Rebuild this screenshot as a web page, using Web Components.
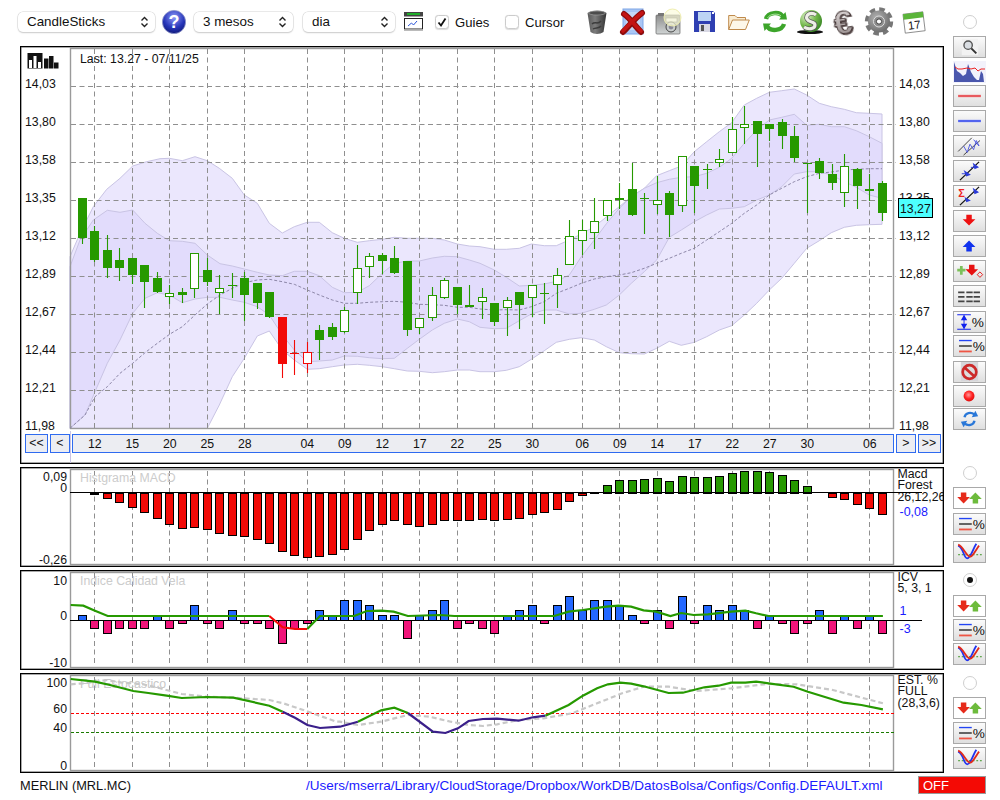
<!DOCTYPE html>
<html>
<head>
<meta charset="utf-8">
<title>Grafic</title>
<style>
  body { margin: 0; background: #fff; font-family: "Liberation Sans", Arial, sans-serif; color: #111; }
</style>
</head>
<body>
<chart-app></chart-app>
<script>
// helpers shared by the charts
const FONT = `"Liberation Sans", Arial, sans-serif`;
const xi = i => Math.floor(82.3 + 12.5 * i) + .5;
const GRID_IDX = [1, 4, 7, 10, 13, 18, 21, 24, 27, 30, 33, 36, 40, 43, 46, 49, 52, 55, 58, 63];
const DATES = ["12", "15", "20", "25", "28", "04", "09", "12", "17", "22", "25", "30", "06", "09", "14", "17", "22", "27", "30", "06"];
const GREEN = "#269900", RED = "#f20a07";

const pts = (list, fx, fy) => list.map(p => `${(fx(p[0])).toFixed(1)},${(fy(p[1])).toFixed(1)}`);
// points were read off crops of the chart, so each block has its own offset
const a = l => pts(l, x => 60 + x / 3, y => 100 + y / 3);
const b = l => pts(l, x => 480 + x / 3, y => 80 + y / 3);
const c = l => pts(l, x => x / 3, y => 565 + y / 3);
const d = l => pts(l, x => 340 + x / 2.8, y => 565 + y / 3);

const vGrid = (y1, y2) => GRID_IDX.map(i =>
  `<line x1="${xi(i)}" x2="${xi(i)}" y1="${y1}" y2="${y2}" stroke="#8f8f8f" stroke-dasharray="5 3.5"/>`).join("");
const label = (x, y, t, anchor = "start", fill = "#111") =>
  `<text x="${x}" y="${y}" text-anchor="${anchor}" fill="${fill}">${t}</text>`;

// ---------- small mac style controls ----------
class MacSelect extends HTMLElement {
  connectedCallback() {
    this.attachShadow({ mode: "open" }).innerHTML = `
    <style>
      :host { display: flex; align-items: center; box-sizing: border-box; height: 20px; padding-left: 9px;
        background: #fff; border-radius: 5px; font-size: 13.4px; position: relative;
        box-shadow: 0 0 0 .5px #d4d4d4, 0 1px 1.5px #c8c8c8; }
      svg { position: absolute; right: 6px; top: 4px; }
    </style>
    <slot></slot>
    <svg width="9" height="12" viewBox="0 0 9 12" fill="none" stroke="#222" stroke-width="1.4">
      <path d="M1.5 4.5 4.5 1.5 7.5 4.5M1.5 7.5 4.5 10.5 7.5 7.5"/>
    </svg>`;
  }
}
customElements.define("mac-select", MacSelect);

class MacCheck extends HTMLElement {
  connectedCallback() {
    const on = this.hasAttribute("checked");
    this.attachShadow({ mode: "open" }).innerHTML = `
    <style>
      :host { display: flex; align-items: center; gap: 6px; font-size: 13.1px; margin-top: 1.5px; }
      .box { box-sizing: border-box; width: 14px; height: 14px; border-radius: 3.5px; background: #fff;
        border: 1px solid #ccc; box-shadow: 0 .5px 1px #ddd; display: flex; }
    </style>
    <span class="box">${on ? `<svg width="12" height="12" viewBox="0 0 12 12"><path d="M2.5 6.5 5 9.5 9.5 2.5" fill="none" stroke="#111" stroke-width="1.8"/></svg>` : ""}</span>
    <slot></slot>`;
  }
}
customElements.define("mac-check", MacCheck);

class MacRadio extends HTMLElement {
  connectedCallback() {
    const on = this.hasAttribute("checked");
    this.attachShadow({ mode: "open" }).innerHTML = `
    <style>
      :host { display: flex; justify-content: center; }
      .r { box-sizing: border-box; width: 14px; height: 14px; border-radius: 50%; background: #fff;
        border: 1px solid #cfcfcf; display: flex; align-items: center; justify-content: center; }
      i { width: 6px; height: 6px; border-radius: 50%; background: #111; }
    </style>
    <span class="r">${on ? "<i></i>" : ""}</span>`;
  }
}
customElements.define("mac-radio", MacRadio);

// ---------- toolbar icons ----------
const TB_ICONS = {
  help: [24, 24, `<defs><radialGradient id="g" cx=".5" cy=".3" r=".75"><stop offset="0" stop-color="#8f9af8"/><stop offset=".6" stop-color="#2635b8"/><stop offset="1" stop-color="#0c1670"/></radialGradient></defs>
    <circle cx="12" cy="12" r="11.6" fill="url(#g)" stroke="#8d93c9" stroke-width=".8"/>
    <text x="12" y="18" text-anchor="middle" font-size="18" font-weight="700" fill="#fff">?</text>`],
  mini: [19, 19, `<rect width="19" height="4.5" fill="#444"/><rect x="3" y="1" width="13" height="2" fill="#1fae2a"/>
    <rect x=".5" y="6.5" width="18" height="10.5" fill="#fff" stroke="#222"/><path d="M4 14 7.5 11 9.5 13 13 9" fill="none" stroke="#2b55d8"/><rect y="17.5" width="19" height="1.5" fill="#bbb"/>`],
  trash: [20, 24, `<defs><linearGradient id="g" x1="0" x2="1"><stop offset="0" stop-color="#5a5a5a"/><stop offset=".4" stop-color="#7c7c7c"/><stop offset="1" stop-color="#333"/></linearGradient></defs>
    <path d="M.5 3C5-.5 15-.5 19.5 3L16.5 22C13 24.5 7 24.5 3.5 22Z" fill="url(#g)"/><ellipse cx="10" cy="3" rx="8.5" ry="2" fill="#4c4c4c" stroke="#aaa" stroke-width=".6"/>
    <path d="M5 14c3-3 6 1 9-3M6 19c3-2 6 0 8-3" fill="none" stroke="#3c3c3c" stroke-width="1.5"/>`],
  del: [26, 26, `<rect x="3" y="0" width="20" height="25" fill="#a9c6f5" stroke="#7ea6e6"/><rect x="6" y="3" width="14" height="18" fill="#c4d8f8"/>
    <path d="M4 5C9 8 15 17 21 23M22 4C16 8 9 17 3 23" fill="none" stroke="#8e0c0c" stroke-width="6" stroke-linecap="round"/>
    <path d="M4 5C9 8 15 17 21 22M22 4C16 8 9 16 3 22" fill="none" stroke="#c41414" stroke-width="3.6" stroke-linecap="round"/>`],
  camera: [27, 27, `<defs><linearGradient id="g" x1="0" x2="0" y1="0" y2="1"><stop offset="0" stop-color="#8c8c8c"/><stop offset="1" stop-color="#d0d4d4"/></linearGradient></defs>
    <rect x="1" y="7" width="24" height="19" rx="1" fill="url(#g)" stroke="#666" stroke-width=".7"/><rect x="3" y="5" width="6" height="3" fill="#777"/>
    <rect x="11" y="10" width="11" height="4" fill="#e8e8e8" stroke="#555" stroke-width=".6"/>
    <circle cx="16" cy="19" r="5" fill="#c8cccc" stroke="#444"/><circle cx="16" cy="19" r="2.4" fill="#889"/>
    <circle cx="17.5" cy="9.5" r="8.5" fill="#fbfbd8" fill-opacity=".65" stroke="#efeeb0"/>`],
  floppy: [21, 21, `<path d="M0 0H19L21 2V21H0Z" fill="#2f3fb2"/><rect x="4" y="1" width="13" height="9" fill="#bcd4f4"/><rect x="5" y="13" width="11" height="8" fill="#d8d8e4"/><rect x="7" y="14" width="3" height="6" fill="#555"/><rect x="18" y="1" width="2" height="2" fill="#fff"/>`],
  folder: [22, 16, `<path d="M.7 15.5V1.5H7L9 3.5H17.5V6" fill="#f9ecd2" stroke="#bf8a4c"/><path d="M.7 15.5 4.5 6H21.3L17.5 15.5Z" fill="#fdf7e9" stroke="#bf8a4c"/>`],
  sync: [24, 23, `<path d="M3 9C5 2 17 1 20 7" fill="none" stroke="#3da52b" stroke-width="4.4"/><path d="M16 9.5 24 9.5 22.5 2Z" fill="#3da52b"/>
    <path d="M21 14C19 21 7 22 4 16" fill="none" stroke="#3da52b" stroke-width="4.4"/><path d="M8 13.5 0 13.5 1.5 21Z" fill="#3da52b"/>
    <path d="M4.5 8C7 3.5 15 3 18 6" fill="none" stroke="#a9e49c" stroke-width="1"/>`],
  coin: [26, 24, `<defs><radialGradient id="g" cx=".3" cy=".3" r=".85"><stop offset="0" stop-color="#dcefc8"/><stop offset=".5" stop-color="#73b84a"/><stop offset="1" stop-color="#2e7d1e"/></radialGradient></defs>
    <ellipse cx="13" cy="22" rx="13" ry="2" fill="#111"/><circle cx="14" cy="11" r="11" fill="url(#g)"/>
    <path d="M19 5C14 1 8 5 10 9 12 13 18 11 18 15 18 19 11 20 7 17" fill="none" stroke="#555" stroke-width="4.6"/>
    <path d="M19 5C14 1 8 5 10 9 12 13 18 11 18 15 18 19 11 20 7 17" fill="none" stroke="#eeeee6" stroke-width="3.2"/>`],
  euro: [23, 24, `<defs><linearGradient id="g" x1="0" x2="0" y1="0" y2="1"><stop offset="0" stop-color="#e6e0e0"/><stop offset="1" stop-color="#8e8484"/></linearGradient></defs>
    <text x="11" y="24" text-anchor="middle" font-size="33" font-weight="700" fill="url(#g)" stroke="#3a2c2c" stroke-width=".8" transform="rotate(-8 11 12)" style="filter:drop-shadow(1.5px 1px 0 #5a4c4c)">€</text>`],
  gear: [28, 29, `<defs><radialGradient id="g" cx=".4" cy=".35" r=".8"><stop offset="0" stop-color="#b4b4b4"/><stop offset="1" stop-color="#5f5f5f"/></radialGradient></defs>
    <circle cx="14" cy="14.5" r="12" fill="none" stroke="#777" stroke-width="4.4" stroke-dasharray="5.4 4"/><circle cx="14" cy="14.5" r="11" fill="url(#g)"/>
    <circle cx="14" cy="14.5" r="5.5" fill="#8c8c8c" stroke="#ddd"/><circle cx="14" cy="14.5" r="2.6" fill="#fff" stroke="#444"/>`],
  cal: [24, 24, `<g transform="rotate(-7 12 12)"><rect x="2" y="3" width="20" height="19" fill="#fff" stroke="#666" stroke-width=".7"/><rect x="2" y="3" width="20" height="5.5" fill="#5bb53a"/>
    <text x="12" y="19" text-anchor="middle" font-size="11.5" fill="#111">17</text></g>`]
};
class TbIcon extends HTMLElement {
  connectedCallback() {
    const [w, h, body] = TB_ICONS[this.getAttribute("name")];
    this.attachShadow({ mode: "open" }).innerHTML = `
    <style>:host { display: block; flex: none; width: ${w}px; height: ${h}px; font-family: ${FONT}; } svg { display: block; overflow: visible; }</style>
    <svg width="${w}" height="${h}" viewBox="0 0 ${w} ${h}">${body}</svg>`;
  }
}
customElements.define("tb-icon", TbIcon);

// ---------- side buttons ----------
const arrowDown = (x, y, col) => `<path d="M${x - 3} ${y - 5}h6v5h4l-7 7-7-7h4z" fill="${col}"/>`;
const arrowUp = (x, y, col) => `<path d="M${x - 3} ${y + 5}h6v-5h4l-7-7-7 7h4z" fill="${col}"/>`;
const pct = (x, y, s) => `<text x="${x}" y="${y}" font-size="${s}" fill="#111">%</text>`;
const SIDE_ICONS = {
  search: `<rect x="8" y="2" width="18" height="18" fill="#f2f2f2"/><circle cx="15" cy="9" r="4.6" fill="#d9dde2" stroke="#555" stroke-width="1.5"/><path d="M18.5 12.5 24 18" stroke="#333" stroke-width="2.2"/>`,
  hist: `<rect width="33" height="22" fill="#f2f2fb"/><path d="M1 21V1L4 10 7 12 10 15 13 13 15 3 18 11 21 16 24 19 26 19 28 10 30 13 31 21Z" fill="#4a57ad"/><path d="M2 6 5 8 9 8 14 7 18 8 22 7 25 10 28 8 32 8" fill="none" stroke="#e22" stroke-width="1"/>`,
  lred: `<path d="M4 11H29" stroke="#f4b0b0" stroke-width="3"/><path d="M4 11H29" stroke="#e22a30" stroke-width="1.4"/>`,
  lblue: `<path d="M4 11H29" stroke="#b0b8f8" stroke-width="3"/><path d="M4 11H29" stroke="#1f35e8" stroke-width="1.4"/>`,
  channel: `<path d="M4 17 19 2M10 21 28 5" stroke="#333" stroke-width="1"/><path d="M10 11 14 18 17 9 21 15 24 5 27 11 21 4" fill="none" stroke="#4a55e0" stroke-width="1"/>`,
  trend: `<path d="M6 21 27 1" stroke="#111" stroke-width="1.4"/><path d="M10 10l3 7 5-2zM20 2l2 7 5-2z" fill="#2b3bd8"/><path d="M8 14h6M18 7h6" stroke="#2b3bd8"/>`,
  sigma: `<text x="4" y="12" font-size="12" font-weight="700" fill="#e22">Σ</text><path d="M6 21 27 1" stroke="#111" stroke-width="1.4"/><path d="M11 12l2 6 5-2zM20 2l2 7 5-2z" fill="#2b3bd8"/>`,
  down: arrowDown(16, 9, "#ee1111"),
  up: arrowUp(16, 12, "#1133ee"),
  plus: `<path d="M3 10H12M7.5 5.5V15" stroke="#7cc05a" stroke-width="3"/>${arrowDown(19, 9, "#e61111")}<path d="M28 12l3 3-3 3-3-3z" fill="none" stroke="#e61111"/>`,
  rows: `<g stroke="#444" stroke-width="2"><path d="M4 7h7M13 7h7M21 7h7M4 12h7M13 12h7M21 12h7M4 17h7M13 17h7M21 17h7"/></g>`,
  iperc: `<path d="M3 3H18M3 19H18" stroke="#1122ee" stroke-width="1.3"/><path d="M10.5 4V18" stroke="#1122ee"/><path d="M10.5 3 7 9H14zM10.5 19 7 13H14z" fill="#1122ee"/>${pct(19, 17, 15)}`,
  lperc: `<path d="M5 5H19" stroke="#2244f4" stroke-width="1.5"/><path d="M5 11H19" stroke="#222" stroke-width="1.5"/><path d="M5 17H19" stroke="#ee5544" stroke-width="2"/>${pct(20, 17, 15)}`,
  stop: `<rect x="7" y="0" width="19" height="21" fill="#d6d6da"/><circle cx="16.5" cy="11" r="7.5" fill="#ddd" stroke="#cc2a2a" stroke-width="3"/><path d="M11 6 22 16" stroke="#cc2a2a" stroke-width="3"/>`,
  rec: `<defs><radialGradient id="g" cx=".45" cy=".4" r=".6"><stop offset="0" stop-color="#ff9a9a"/><stop offset=".6" stop-color="#f22"/><stop offset="1" stop-color="#d11"/></radialGradient></defs><circle cx="16" cy="11" r="6" fill="url(#g)"/>`,
  refresh: `<path d="M11 9C12 4 18 3 22 6" fill="none" stroke="#2a78d8" stroke-width="2.6"/><path d="M19 9 26 8 23 2Z" fill="#2a78d8"/><path d="M22 13C21 18 15 19 11 16" fill="none" stroke="#2a78d8" stroke-width="2.6"/><path d="M14 13 7 14 10 20Z" fill="#2a78d8"/>`,
  updown: arrowDown(10, 10, "#e62a1a") + arrowUp(23, 12, "#6dbb3c"),
  vee: `<path d="M4 14H30" stroke="#2a8a10" stroke-dasharray="2 2"/><path d="M4 4C10 6 10 18 14 18 18 18 20 8 24 2" fill="none" stroke="#2233ee" stroke-width="2"/><path d="M4 3C10 5 14 18 18 16 21 14 24 8 27 4" fill="none" stroke="#e22a1a" stroke-width="2"/>`
};
class SideBtn extends HTMLElement {
  connectedCallback() {
    const name = this.getAttribute("icon");
    const flat = name === "hist", white = name === "updown";
    this.attachShadow({ mode: "open" }).innerHTML = `
    <style>
      :host { display: block; box-sizing: border-box; width: 33px; height: 22px; font-family: ${FONT};
        border: ${flat ? "0" : "1px solid #a9a9a9"}; background: ${white ? "#fff" : flat ? "none" : "linear-gradient(#fbfbfb,#dfdfdf)"}; }
      svg { display: block; width: 100%; height: 100%; }
    </style>
    <svg viewBox="0 0 33 22">${SIDE_ICONS[name]}</svg>`;
  }
}
customElements.define("side-btn", SideBtn);

// ---------- date bar below the candles ----------
class DateNav extends HTMLElement {
  connectedCallback() {
    const dates = DATES.map((t, k) => `<span style="grid-column:${GRID_IDX[k] + 1}">${t}</span>`).join("");
    this.attachShadow({ mode: "open" }).innerHTML = `
    <style>
      :host { display: flex; height: 19px; margin: 3px 0 0 4px; gap: 2px; font-size: 12.3px; line-height: 19px; }
      div { box-sizing: border-box; border: 1px solid #2f6bf0; background: #ecedf2; display: flex; align-items: center; justify-content: center; }
      .n1 { width: 23px; } .n2 { width: 19.5px; }
      .dates { display: grid; grid-template-columns: repeat(65, 12.5px); width: 822.5px; padding-left: 3.5px; justify-content: start; }
      .dates span { justify-self: center; grid-row: 1; white-space: nowrap; }
    </style>
    <div class="n1">&lt;&lt;</div><div class="n2">&lt;</div>
    <div class="dates">${dates}</div>
    <div class="n2">&gt;</div><div class="n1">&gt;&gt;</div>`;
  }
}
customElements.define("date-nav", DateNav);

// ---------- main candle chart ----------
const OUTER_TOP = [...a([[30,470],[60,400],[100,320],[140,268],[180,235],[218,198],[260,185],[300,176],[328,175],[367,182],[405,170],[442,182],[478,205],[517,235],[553,285],[592,310],[628,370],[667,399],[703,380],[742,367],[778,367],[817,398],[853,415],[892,427],[928,422],[967,418],[1003,412],[1042,415],[1078,415],[1117,415],[1153,420],[1192,432],[1228,438]]),
  ...b([[0,500],[43,508],[79,508],[118,505],[154,492],[193,497],[229,497],[268,480],[304,462],[343,440],[380,410],[418,380],[454,350],[493,325],[530,287],[568,272],[604,258],[643,215],[680,185],[718,155],[755,128],[793,75],[830,55],[868,37],[905,32],[943,27],[980,45],[1018,70],[1054,80],[1093,88],[1129,98],[1168,100],[1206,102]])];
const OUTER_BOT = [...a([[30,985],[442,985],[478,915],[517,830],[553,775],[592,708],[628,693],[667,750],[703,780],[742,808],[778,806],[817,800],[853,795],[892,793],[928,796],[967,800],[1003,806],[1042,813],[1078,814],[1117,818],[1153,815],[1192,810],[1228,810]]),
  ...b([[0,875],[43,875],[79,871],[118,860],[154,838],[193,812],[229,787],[268,778],[304,773],[343,780],[379,800],[418,818],[454,821],[493,822],[530,805],[568,784],[604,796],[643,787],[680,770],[718,750],[755,737],[793,705],[830,670],[868,630],[905,595],[943,550],[980,505],[1018,482],[1054,458],[1093,442],[1129,436],[1168,434],[1206,433]])];
const INNER_TOP = [...a([[30,500],[60,420],[100,360],[142,331],[180,337],[218,330],[255,370],[292,400],[328,422],[367,424],[405,430],[442,465],[480,491],[517,498],[553,507],[592,517],[628,525],[667,527],[703,514],[742,514],[778,527],[817,562],[853,578],[892,577],[928,557],[967,520],[1003,490],[1042,483],[1078,483],[1117,474],[1153,469],[1192,470],[1228,480]]),
  ...b([[0,550],[43,570],[79,592],[118,618],[154,616],[193,612],[229,604],[268,585],[304,530],[343,480],[380,430],[418,385],[454,350],[493,325],[530,308],[568,298],[604,292],[643,290],[680,280],[718,262],[755,235],[793,190],[830,150],[868,120],[905,112],[943,103],[980,136],[1018,133],[1054,140],[1093,140],[1129,152],[1168,170],[1206,190]])];
const INNER_BOT = [...a([[30,985],[75,945],[103,880],[142,790],[180,720],[218,640],[255,595],[292,578],[328,585],[367,608],[405,597],[442,592],[480,592],[517,600],[553,607],[592,620],[628,645],[667,705],[703,750],[742,785],[778,783],[817,780],[853,768],[892,769],[928,773],[967,776],[1003,775],[1042,745],[1078,718],[1117,690],[1153,670],[1192,657],[1228,665]]),
  ...b([[0,742],[43,746],[79,745],[118,722],[154,702],[193,690],[229,690],[268,702],[304,700],[343,688],[379,675],[418,645],[454,610],[493,575],[530,540],[568,472],[604,450],[643,425],[680,405],[718,387],[755,385],[793,380],[830,360],[868,345],[905,320],[943,282],[980,275],[1018,275],[1054,285],[1093,305],[1129,322],[1168,345],[1206,355]])];
const SMA = [...a([[30,985],[75,945],[105,890],[142,860],[180,820],[218,790],[255,758],[292,730],[330,702],[367,680],[405,645],[442,612],[480,585],[517,565],[553,548],[592,540],[628,538],[667,545],[703,553],[742,570],[778,585],[817,600],[853,610],[892,610],[928,607],[967,605],[1003,604],[1042,607],[1078,613],[1117,614],[1153,616],[1192,622],[1228,622]]),
  ...b([[0,687],[43,690],[79,689],[118,690],[154,680],[193,665],[229,640],[268,625],[304,610],[343,597],[379,590],[418,585],[454,578],[493,565],[530,550],[568,535],[604,520],[643,505],[680,480],[718,455],[755,430],[793,400],[830,375],[868,345],[905,325],[943,305],[980,290],[1018,280],[1054,276],[1093,270],[1129,268],[1168,266],[1206,266]])];

// type (f filled, h hollow, d cross), wick top, wick bottom, body top, body bottom
const CANDLES_A = [["f",294,432,294,414],["f",378,485,393,480],["f",405,534,450,504],["f",445,543,480,504],["f",474,552,474,525],["f",495,624,495,546],["f",516,580,534,576],["h",555,611,580,590],["f",564,609,576,585],["h",460,594,460,568],["f",474,558,510,546],["h",525,642,565,578],["d",519,594,556,556],["f",516,664,534,585],["f",549,627,549,609],["f",576,654,576,651],["f",651,834,651,792],["d",720,825,759,759],["h",726,820,757,791],["f",675,780,690,720],["f",669,720,681,711],["h",621,699,631,695],["h",435,612,505,578],["h",460,534,469,500],["f",460,522,465,483],["f",438,522,474,519],["f",483,708,483,690],["h",655,702,655,683],["h",561,663,586,653],["h",534,597,541,593],["f",561,642,561,615],["f",555,622,615,622]];
const CANDLES_B = [["h",625,717,652,667],["f",669,738,669,726],["h",652,768,661,683],["f",636,747,636,675],["h",616,711,616,653],["d",610,732,640,640],["h",565,684,586,614],["h",420,555,469,555],["h",420,525,451,482],["h",354,507,424,458],["h",361,423,361,407],["f",309,387,354,360],["f",249,408,327,405],["d",339,462,355,355],["h",288,402,361,374],["f",333,471,339,405],["h",229,396,229,377],["f",258,399,258,318],["d",252,327,268,268],["h",207,261,238,250],["h",111,220,148,218],["h",78,192,133,143],["f",123,261,123,162],["f",132,183,132,147],["f",117,207,126,168],["f",138,246,168,234],["d",249,399,249,249],["f",234,297,243,279],["f",251,329,282,309],["h",222,381,259,338],["f",265,387,267,318],["f",282,363,327,333],["f",303,423,309,399]];

function candle(x, type, wt, wb, bt, bb, col) {
  let s = `<line x1="${x}" x2="${x}" y1="${wt}" y2="${wb}" stroke="${col}" stroke-width="1.1"/>`;
  if (type === "f") s += `<rect x="${x - 4.5}" y="${bt}" width="9" height="${Math.max(bb - bt, 2)}" fill="${col}"/>`;
  if (type === "h") s += `<rect x="${x - 4}" y="${bt + .5}" width="8" height="${Math.max(bb - bt - 1, 2)}" fill="#fff" stroke="${col}"/>`;
  if (type === "d") s += `<line x1="${x - 4.5}" x2="${x + 4.5}" y1="${bt + .5}" y2="${bt + .5}" stroke="${col}"/>`;
  return s;
}

class PricePanel extends HTMLElement {
  connectedCallback() {
    const prices = ["14,03", "13,80", "13,58", "13,35", "13,12", "12,89", "12,67", "12,44", "12,21", "11,98"];
    const yG = prices.map((_, k) => 86.5 + 38 * k);
    let cs = "";
    [...CANDLES_A.map(r => [r, 100]), ...CANDLES_B.map(r => [r, 80])].forEach(([r, off], i) => {
      const col = i >= 16 && i <= 18 ? RED : GREEN;
      const y = v => Math.round(off + v / 3);
      cs += candle(xi(i), r[0], y(r[1]), y(r[2]), y(r[3]), y(r[4]), col);
    });
    const band = (top, bot, fill) => `<polygon points="${[...top, ...[...bot].reverse()].join(" ")}" fill="${fill}" stroke="#c9c4e4"/>`;
    const hLines = yG.slice(0, 9).map(y => `<line x1="71" x2="896" y1="${y}" y2="${y}" stroke="#8f8f8f" stroke-dasharray="5 3.5"/>`).join("");
    const icon = `<g fill="#111"><rect x="27.5" y="53" width="15" height="15.5"/><rect x="44" y="58.5" width="4.5" height="10"/><rect x="49" y="56" width="4.5" height="12.5"/><rect x="54" y="62.5" width="4.5" height="6"/></g>
      <g fill="#fff"><rect x="29" y="60" width="3" height="8"/><rect x="33.5" y="56" width="3" height="12"/><rect x="38" y="62" width="3" height="6"/></g>`;
    this.attachShadow({ mode: "open" }).innerHTML = `
    <style>
      :host { display: block; box-sizing: border-box; height: 418px; border: 1px solid #000; position: relative;
        font-size: 12.3px; font-family: ${FONT}; box-shadow: inset 0 0 0 .5px #555; }
      :host::after { content: ""; position: absolute; left: 49px; top: 384px; bottom: 0; width: 1px; background: #c9c4e4; }
      svg { display: block; overflow: visible; }
    </style>
    <svg width="922" height="384" viewBox="21 47 922 384">
      ${band(OUTER_TOP, OUTER_BOT, "#ebe7fd")}
      ${band(INNER_TOP, INNER_BOT, "#e2dcfc")}
      ${hLines}
      ${vGrid(49, 428)}
      <rect x="70.5" y="48.5" width="823" height="380" fill="none" stroke="#9a9a9a" stroke-width="1.4"/>
      <polyline points="${SMA.join(" ")}" fill="none" stroke="#8d87a8" stroke-dasharray="3 2"/>
      ${cs}
      ${icon}
      ${label(80, 63, "Last: 13.27 - 07/11/25")}
      ${prices.map((p, k) => label(25, 88 + 38 * k, p)).join("")}
      ${prices.map((p, k) => label(899, 88 + 38 * k, p)).join("")}
      <rect x="898.5" y="198.5" width="34" height="19" fill="#4dffff" stroke="#000"/>
      ${label(900, 212.5, "13,27")}
    </svg>
    <date-nav></date-nav>`;
  }
}
customElements.define("price-panel", PricePanel);

// ---------- lower indicator panels ----------
const MACD_Y = { 1: 493.5, 2: 497.7, 3: 501.7, 4: 506.7, 5: 511.7, 6: 517.7, 7: 523.7, 8: 527.7, 9: 526.7, 10: 528.7, 11: 532.7, 12: 534.7, 13: 536.3, 14: 539.3, 15: 543.3, 16: 551.3, 17: 555.3, 18: 557.3, 19: 556.3, 20: 554.3, 21: 549.3, 22: 539.3, 23: 530.3, 24: 524, 25: 520, 26: 524, 27: 526, 28: 524, 29: 520, 30: 520, 31: 520, 32: 519, 33: 520, 34: 519, 35: 518, 36: 514, 37: 512, 38: 509, 39: 501, 40: 495, 41: 491.5, 42: 485, 43: 480, 44: 480, 45: 479, 46: 478, 47: 481, 48: 476, 49: 477, 50: 477, 51: 476, 52: 473, 53: 471, 54: 471, 55: 472, 56: 475, 57: 480, 58: 486, 60: 497, 61: 499, 62: 504, 63: 508, 64: 514 };
const ICV = [1,-2,-3,-2,-2,-2,1,-2,-1,3,-1,-2,2,-1,-1,-2,-5,-2,-1,2,1,4,4,3,1,1,-4,1,2,4,-2,-1,-2,-3,1,2,3,-1,3,5,2,4,4,3,1,-1,2,-2,5,-1,3,2,3,2,-2,1,-1,-3,-1,2,-3,1,-2,1,-3];

function macdDraw() {
  let s = vGrid(471, 564);
  for (let i = 0; i < 65; i++) {
    const y = MACD_Y[i];
    if (y === undefined) continue;
    const top = Math.round(Math.min(y, 492.5)), bot = Math.round(Math.max(y, 492.5));
    s += `<rect x="${xi(i) - 4}" y="${top + .5}" width="8" height="${Math.max(bot - top, 1)}" fill="${y > 492.5 ? RED : GREEN}" stroke="#000"/>`;
  }
  s += label(80, 482, "Histgrama MACD", "start", "#cccccc");
  s += `<line x1="70" x2="898" y1="492.5" y2="492.5" stroke="#000" stroke-width="1.2"/>`;
  s += label(67, 481, "0,09", "end") + label(67, 492, "0", "end") + label(67, 564, "-0,26", "end");
  return s;
}
function icvDraw() {
  let s = vGrid(573, 666);
  const unit = { 1: 5, 2: 10, 3: 15, 4: 20, 5: 24 };
  ICV.forEach((v, i) => {
    const h = v > 0 ? unit[v] : [0, 3, 8, 13, 18, 23][-v];
    const y = v > 0 ? 620 - h : 620;
    s += `<rect x="${xi(i) - 4}" y="${y + .5}" width="8" height="${h}" fill="${v > 0 ? "#2468ff" : "#f0147a"}" stroke="#000"/>`;
  });
  s += label(80, 585, "Indice Calidad Vela", "start", "#cccccc");
  s += `<line x1="70" x2="898" y1="620.5" y2="620.5" stroke="#000" stroke-width="1.2"/>`;
  const line = (p, col) => `<polyline points="${p.join(" ")}" fill="none" stroke="${col}" stroke-width="2.2"/>`;
  s += line(c([[212,120],[250,122],[285,137],[323,153],[808,153]]), GREEN);
  s += line(c([[808,153],[848,187],[885,192],[922,192]]), RED);
  s += line([...c([[922,192],[960,153]]), ...d([[0,153],[40,153],[75,138],[115,137],[150,140],[190,153],[280,150],[320,153],[600,153],[640,140],[680,135],[745,125],[780,122],[815,125],[850,136],[885,140],[925,153],[955,144],[990,150],[1030,148],[1095,140],[1135,137],[1165,145],[1200,153],[1520,153]])], GREEN);
  s += label(67, 585, "10", "end") + label(67, 620, "0", "end") + label(67, 667, "-10", "end");
  return s;
}
function estDraw() {
  let s = vGrid(677, 769);
  s += `<line x1="71" x2="895" y1="713.5" y2="713.5" stroke="#f00" stroke-dasharray="3 2"/>`;
  s += `<line x1="71" x2="895" y1="732.5" y2="732.5" stroke="#1a7a00" stroke-dasharray="3 2"/>`;
  s += label(80, 688, "Full Estocastico", "start", "#c8c8c8");
  const line = (p, col, extra = "") => `<polyline points="${p.join(" ")}" fill="none" stroke="${col}" stroke-width="2.2" ${extra}/>`;
  s += line([...c([[212,358],[250,355],[320,345],[360,352],[430,358],[480,370],[545,387],[620,395],[700,398],[808,405],[850,415],[925,440]]),
    ...d([[-10,470],[0,470],[50,480],[115,470],[190,450],[250,455],[310,470],[360,480],[400,483],[440,478],[500,465],[570,460],[650,445],[720,415],[790,385],[850,365],[920,365],[1000,378],[1095,370],[1195,357],[1280,358],[1380,375],[1520,415]])], "#c8c8c8", `stroke-dasharray="5 3"`);
  s += line(c([[212,342],[285,350],[330,360],[400,378],[445,384],[500,392],[545,399],[620,396],[700,398],[808,422],[848,440]]), GREEN);
  s += line([...c([[848,440],[885,458],[922,480],[960,489]]), ...d([[0,485],[50,470]])], "#3a1f8a");
  s += line(d([[50,470],[115,436],[152,428],[190,444]]), GREEN);
  s += line(d([[190,444],[260,500],[295,504],[330,490],[360,468],[400,462],[440,461],[500,467],[540,457],[575,452]]), "#3a1f8a");
  s += line(d([[575,452],[640,420],[680,392],[720,370],[750,358],[785,353],[815,356],[850,364],[920,384],[960,383],[1020,367],[1060,362],[1095,353],[1135,353],[1165,350],[1200,355],[1270,365],[1310,380],[1410,413],[1460,420],[1520,433]]), GREEN);
  s += label(67, 687, "100", "end") + label(67, 713, "60", "end") + label(67, 732, "40", "end") + label(67, 770, "0", "end");
  return s;
}
const DRAW = { macd: [macdDraw, 468], icv: [icvDraw, 571], est: [estDraw, 674] };

class IndicatorPanel extends HTMLElement {
  connectedCallback() {
    const [draw, top] = DRAW[this.getAttribute("kind")];
    const tick = this.getAttribute("tick");
    this.attachShadow({ mode: "open" }).innerHTML = `
    <style>
      :host { display: flex; box-sizing: border-box; height: 100px; border: 1px solid #000;
        font-size: 12.3px; font-family: ${FONT}; box-shadow: inset 0 0 0 .5px #555; }
      svg { display: block; flex: none; }
      .legend { flex: 1; position: relative; overflow: hidden; padding: 1px 0 0 .5px; font-size: 12.3px; line-height: 11.4px; }
      .tick { position: absolute; left: 0; width: 25px; height: 1px; background: #000; top: ${tick}px; }
      ::slotted(.val) { color: #1a1aff; padding-left: 2px; }
    </style>
    <svg width="876" height="98" viewBox="21 ${top} 876 98">
      <rect x="70.5" y="${top + 1.5}" width="823" height="95" fill="none" stroke="#9a9a9a" stroke-width="1.4"/>
      ${draw()}
    </svg>
    <div class="legend">${tick ? `<i class="tick"></i>` : ""}<slot></slot></div>`;
  }
}
customElements.define("indicator-panel", IndicatorPanel);

// ---------- page ----------
class StatusBar extends HTMLElement {
  connectedCallback() {
    this.attachShadow({ mode: "open" }).innerHTML = `
    <style>
      :host { display: flex; align-items: center; height: 18px; margin: 3px 0 0 20px; width: 966px; font-size: 12.8px; }
      .name { width: 286px; flex: none; }
      .path { color: #1a1aff; white-space: nowrap; flex: none; font-size: 13.5px; }
      .off { margin-left: auto; box-sizing: border-box; width: 68px; height: 18px; background: #f40a05; color: #fff;
        border: 1px solid #999; padding: 2px 0 0 4px; font-size: 13px; line-height: 14px; }
    </style>
    <span class="name"><slot name="name"></slot></span>
    <span class="path"><slot name="path"></slot></span>
    <span class="off">OFF</span>`;
  }
}
customElements.define("status-bar", StatusBar);

class ChartApp extends HTMLElement {
  connectedCallback() {
    this.attachShadow({ mode: "open" }).innerHTML = `
    <style>
      :host { display: block; width: 1000px; height: 800px; overflow: hidden; font-family: ${FONT}; color: #111; }
      .top { display: flex; gap: 9px; padding-left: 20px; }
      .main { width: 924px; flex: none; display: flex; flex-direction: column; gap: 3px; }
      .toolbar { display: flex; align-items: center; height: 43px; margin-left: -2px; }
      .side { width: 33px; flex: none; display: flex; flex-direction: column; gap: 3px; padding-top: 15px; }
    </style>
    <div class="top">
      <div class="main">
        <div class="toolbar">
          <mac-select style="width:137px">CandleSticks</mac-select>
          <tb-icon name="help" style="margin-left:6.5px"></tb-icon>
          <mac-select style="width:99px;margin-left:8.5px">3 mesos</mac-select>
          <mac-select style="width:92px;margin-left:10px">dia</mac-select>
          <tb-icon name="mini" style="margin-left:9px"></tb-icon>
          <mac-check checked style="width:54px;margin-left:12px">Guies</mac-check>
          <mac-check style="width:61px;margin-left:16px">Cursor</mac-check>
          <tb-icon name="trash" style="margin-left:21px"></tb-icon>
          <tb-icon name="del" style="margin-left:13px"></tb-icon>
          <tb-icon name="camera" style="margin-left:9px"></tb-icon>
          <tb-icon name="floppy" style="margin-left:12px"></tb-icon>
          <tb-icon name="folder" style="margin-left:13px"></tb-icon>
          <tb-icon name="sync" style="margin-left:13px"></tb-icon>
          <tb-icon name="coin" style="margin-left:10px"></tb-icon>
          <tb-icon name="euro" style="margin-left:9px"></tb-icon>
          <tb-icon name="gear" style="margin-left:10px"></tb-icon>
          <tb-icon name="cal" style="margin-left:9px"></tb-icon>
        </div>
        <price-panel></price-panel>
        <indicator-panel kind="macd" tick="24">
          <div>Macd</div><div>Forest</div><div>26,12,26</div><div class="val" style="margin-top:4px;font-size:12.5px">-0,08</div>
        </indicator-panel>
        <indicator-panel kind="icv" tick="49">
          <div>ICV</div><div>5, 3, 1</div><div class="val" style="margin-top:11px;font-size:12.5px">1</div><div class="val" style="margin-top:7px;font-size:12.5px">-3</div>
        </indicator-panel>
        <indicator-panel kind="est">
          <div>EST. %</div><div>FULL</div><div>(28,3,6)</div>
        </indicator-panel>
      </div>
      <div class="side">
        <mac-radio></mac-radio>
        <side-btn icon="search" style="margin-top:4px"></side-btn>
        <side-btn icon="hist"></side-btn>
        <side-btn icon="lred" style="margin-top:-1px"></side-btn>
        <side-btn icon="lblue"></side-btn>
        <side-btn icon="channel"></side-btn>
        <side-btn icon="trend"></side-btn>
        <side-btn icon="sigma"></side-btn>
        <side-btn icon="down"></side-btn>
        <side-btn icon="up"></side-btn>
        <side-btn icon="plus"></side-btn>
        <side-btn icon="rows"></side-btn>
        <side-btn icon="iperc" style="margin-top:1px"></side-btn>
        <side-btn icon="lperc" style="margin-top:-1px"></side-btn>
        <side-btn icon="stop" style="margin-top:1px"></side-btn>
        <side-btn icon="rec" style="margin-top:-1px"></side-btn>
        <side-btn icon="refresh" style="margin-top:-2px"></side-btn>
        <mac-radio style="margin-top:33px"></mac-radio>
        <side-btn icon="updown" style="margin-top:4px"></side-btn>
        <side-btn icon="lperc" style="margin-top:1px"></side-btn>
        <side-btn icon="vee" style="margin-top:3px"></side-btn>
        <mac-radio checked style="margin-top:7px"></mac-radio>
        <side-btn icon="updown" style="margin-top:5px"></side-btn>
        <side-btn icon="lperc" style="margin-top:-1px"></side-btn>
        <side-btn icon="vee" style="margin-top:-1px"></side-btn>
        <mac-radio style="margin-top:8px"></mac-radio>
        <side-btn icon="updown" style="margin-top:4px"></side-btn>
        <side-btn icon="lperc"></side-btn>
        <side-btn icon="vee"></side-btn>
      </div>
    </div>
    <status-bar>
      <span slot="name">MERLIN (MRL.MC)</span>
      <span slot="path">/Users/mserra/Library/CloudStorage/Dropbox/WorkDB/DatosBolsa/Configs/Config.DEFAULT.xml</span>
    </status-bar>`;
  }
}
customElements.define("chart-app", ChartApp);
</script>
</body>
</html>
